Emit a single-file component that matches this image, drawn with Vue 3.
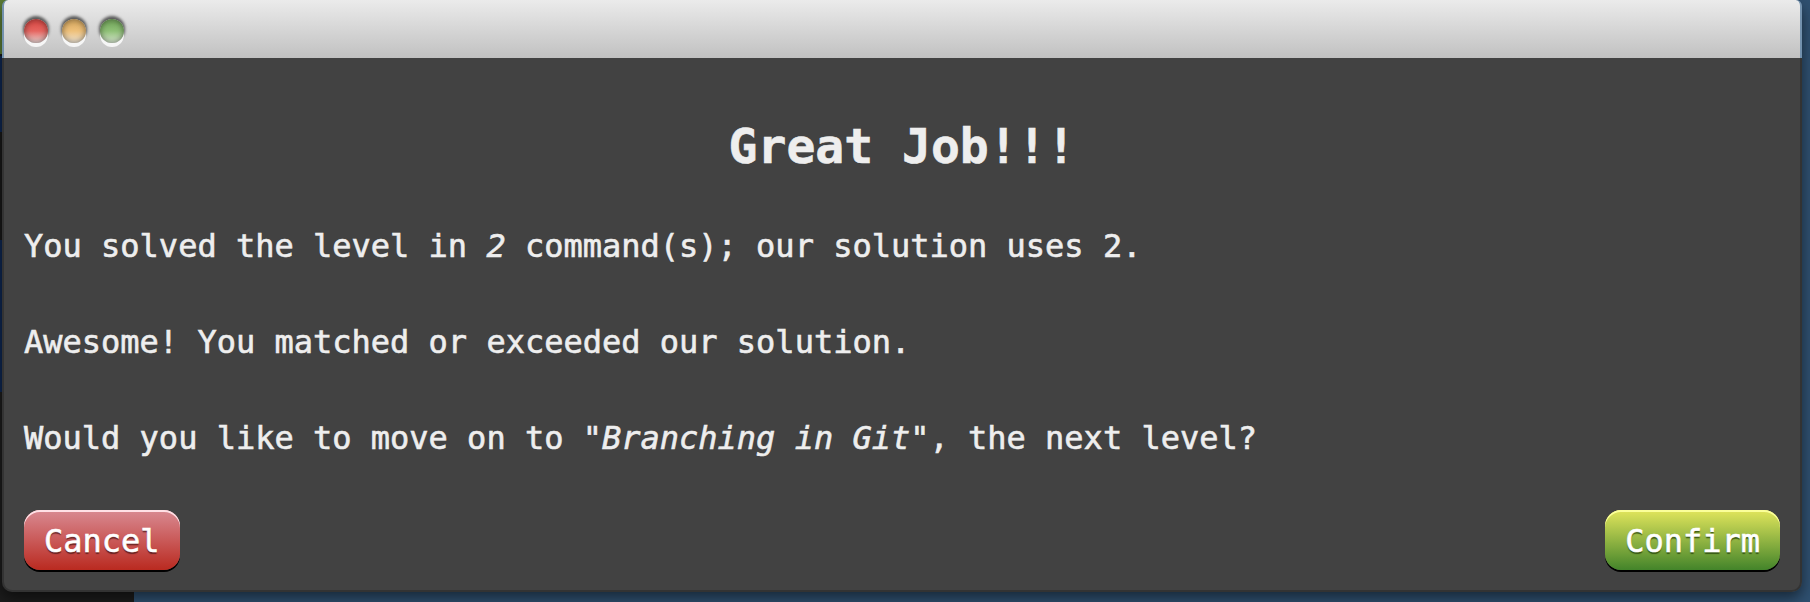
<script setup>
const lights = ['red', 'yellow', 'green']
</script>

<template>
  <div class="desktop">
    <div class="backdrop"></div>
    <div class="window">
      <header class="titlebar">
        <span v-for="c in lights" :key="c" class="light" :class="c"></span>
      </header>
      <main class="body">
        <h1>Great Job!!!</h1>
        <p>You solved the level in <em>2</em> command(s); our solution uses 2.</p>
        <p>Awesome! You matched or exceeded our solution.</p>
        <p>Would you like to move on to "<em>Branching in Git</em>", the next level?</p>
        <div class="actions">
          <button class="btn cancel">Cancel</button>
          <button class="btn confirm">Confirm</button>
        </div>
      </main>
    </div>
  </div>
</template>

<style>
html, body { margin: 0; overflow: hidden; }
</style>

<style scoped>
.desktop {
  position: relative;
  box-sizing: border-box;
  width: 1810px;
  height: 602px;
  padding-left: 2px;
  overflow: hidden;
  background: #2f5070;
  font-family: "DejaVu Sans Mono", Menlo, monospace;
}
.backdrop {
  position: absolute;
  left: 0;
  top: 0;
  width: 134px;
  height: 602px;
  background: linear-gradient(#5a7a34 0 54px, #181818 54px 56px, #0e2650 56px 132px, #181818 132px 240px, #0e2650 240px 392px, #1c1c1c 392px);
}
.window {
  position: relative;
  box-sizing: border-box;
  width: 1800px;
  height: 592px;
  border-radius: 10px;
  box-shadow: 0 6px 14px rgba(0, 0, 0, 0.5);
}
.titlebar {
  box-sizing: border-box;
  display: flex;
  gap: 14px;
  height: 58px;
  padding: 19px 0 0 20px;
  border: solid #7391ad;
  border-width: 0 2px;
  border-radius: 6px 6px 0 0;
  background: linear-gradient(#ebebeb, #c1c1c1);
}
.light {
  width: 24px;
  height: 24px;
  border-radius: 50%;
  box-shadow: 0 4px 0 #f6f6f6, 0 -2px 3px 1px rgba(0, 0, 0, 0.6), inset 0 0 6px rgba(0, 0, 0, 0.5);
}
.red { background: linear-gradient(#dd4f4b 15%, #e56560 50%, #eed0ce 95%); }
.yellow { background: linear-gradient(#dcae66 15%, #eec07a 50%, #f1e4cf 95%); }
.green { background: linear-gradient(#7aad62 15%, #8fc077 50%, #d4e6cb 95%); }
.body {
  box-sizing: border-box;
  height: 534px;
  padding: 48px 20px 20px;
  border: 2px solid #333;
  border-top: 0;
  border-radius: 0 0 10px 10px;
  background: #424242;
  color: #eee;
}
h1 {
  margin: 0 0 40px;
  font-size: 48px;
  line-height: 80px;
  text-align: center;
  -webkit-text-stroke: 0.6px #eee;
}
p {
  margin: 0 0 56px;
  font-size: 32px;
  line-height: 40px;
  white-space: pre;
  -webkit-text-stroke: 0.6px #eee;
}
.actions {
  display: flex;
  justify-content: space-between;
  margin-top: -4px;
}
.btn {
  height: 60px;
  padding: 2px 20px 0;
  border: 0;
  border-radius: 16px;
  color: #fff;
  font: 32px/58px "DejaVu Sans Mono", Menlo, monospace;
  -webkit-text-stroke: 0.6px #fff;
}
.cancel {
  background: linear-gradient(#d98a92, #ba2a20);
  box-shadow: inset 0 2px 0 #ffe0e6, 0 2px 0 #000;
  text-shadow: 0 2px 1px rgba(70, 20, 20, 0.7);
}
.confirm {
  background: linear-gradient(#e2e65c, #43842a);
  box-shadow: inset 0 2px 0 #fbff9a, 0 2px 0 #000;
  text-shadow: 0 2px 1px rgba(40, 70, 10, 0.8);
}
</style>
